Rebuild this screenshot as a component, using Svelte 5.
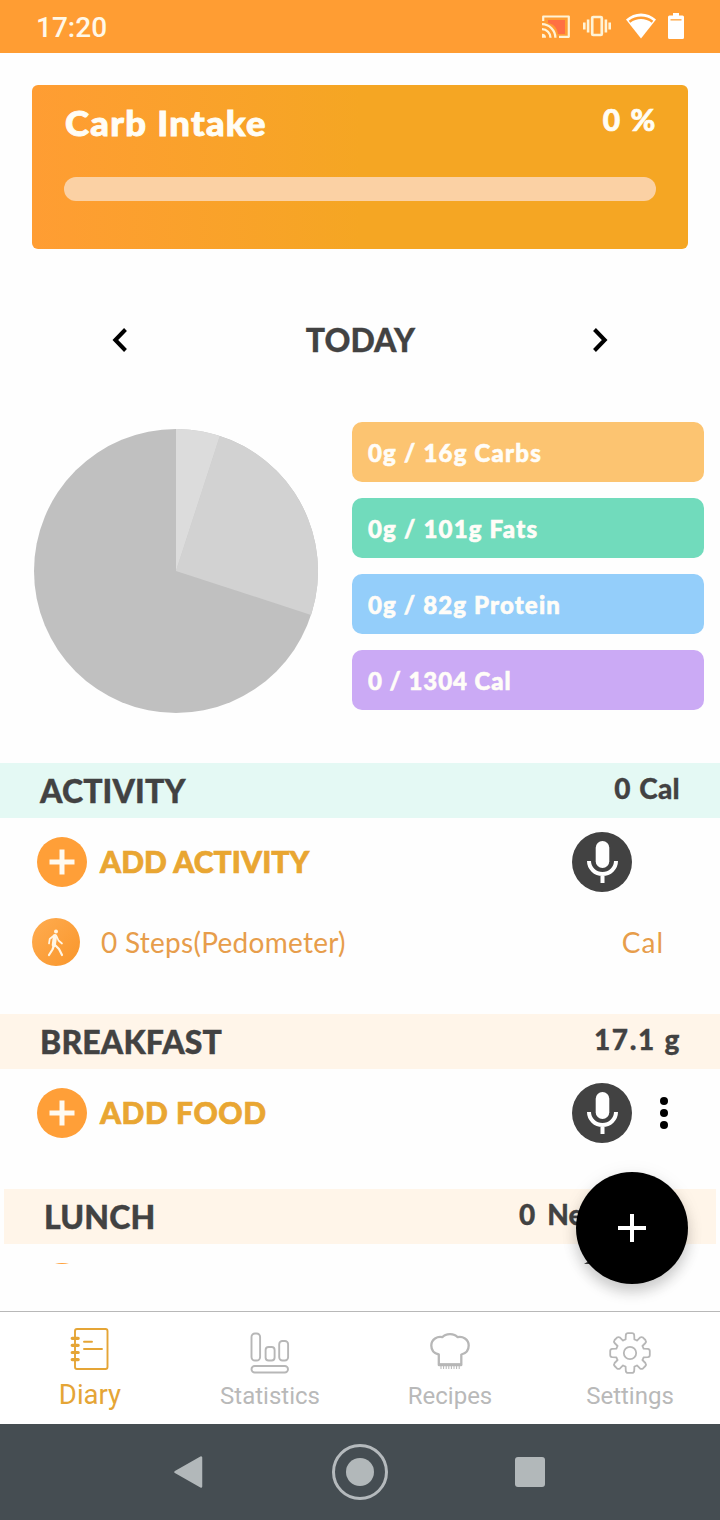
<script>
  const macros = [
    { text: '0g / 16g Carbs', color: '#fcc471', spacing: 1.2 },
    { text: '0g / 101g Fats', color: '#71dbbc', spacing: 1.2 },
    { text: '0g / 82g Protein', color: '#94cefa', spacing: 1.15 },
    { text: '0 / 1304 Cal', color: '#cbaaf5', spacing: 0.95 }
  ];
</script>

{#snippet plus()}
  <span class="plus">
    <svg width="50" height="50" viewBox="0 0 50 50"><path d="M25 12.5v25M12.5 25h25" stroke="#fffaf0" stroke-width="5" /></svg>
  </span>
{/snippet}

{#snippet mic()}
  <svg class="mic" width="60" height="60" viewBox="0 0 60 60">
    <circle cx="30" cy="30" r="30" fill="#424242" />
    <rect x="23.7" y="9" width="13.6" height="27" rx="6.8" fill="#fff" />
    <path d="M17 29a13.5 13 0 0 0 27 0M30.5 42v9" fill="none" stroke="#fff" stroke-width="4" />
  </svg>
{/snippet}

<div class="phone">
  <header class="status">
    <span class="clock">17:20</span>
    <svg class="cast" width="28" height="24" viewBox="0 0 28 24">
      <path d="M6 5h17v14h-7C15 12 11 9 6 8z" fill="#ff7043" />
      <path d="M1.2 6V1.5h25.6v20.3H17" fill="none" stroke="#fff3d6" stroke-width="2.2" stroke-linejoin="round" />
      <path d="M0 9.2a13.6 13.6 0 0 1 13.4 13.6M0 14.2a8.6 8.6 0 0 1 8.5 8.6" fill="none" stroke="#fff3d6" stroke-width="2.3" />
      <path d="M0 18.8a4 4 0 0 1 4 4H0z" fill="#fff3d6" />
    </svg>
    <svg class="vibe" width="28" height="22" viewBox="0 0 28 22">
      <rect x="9.2" y="2" width="9.6" height="18" rx="1" fill="none" stroke="#fff3d6" stroke-width="2.7" />
      <path d="M1.3 7.5v7M5.1 4.5v13M26.700 7.500v7M22.900 4.500v13" stroke="#fff3d6" stroke-width="2.600" />
    </svg>
    <svg class="wifi" width="30" height="26" viewBox="0 0 30 26">
      <path d="M0 6.600C8.500-1.700 21.500-1.700 30 6.600L15 25.500z" fill="#fff" />
      <path d="M3.500 8.700C10.500 3.500 19.500 3.500 26.500 8.700" fill="none" stroke="#ff9d33" stroke-width="2.600" />
    </svg>
    <svg class="battery" width="16" height="26" viewBox="0 0 16 26">
      <path d="M5 0h6v2.500h3.500q1.500 0 1.500 1.500v20.500q0 1.500-1.500 1.500h-13Q0 26 0 24.500V4q0-1.500 1.500-1.500H5z" fill="#fff" />
      <path d="M2.500 6.800h11" stroke="#ffb45f" stroke-width="1.600" />
    </svg>
  </header>

  <main>
    <section class="intake">
      <div class="intake-top">
        <h1>Carb Intake</h1>
        <strong>0 %</strong>
      </div>
      <div class="track"></div>
    </section>

    <nav class="day">
      <svg width="16" height="26" viewBox="0 0 16 26"><path d="M13.500 2.500L3.300 13l10.200 10.500" fill="none" stroke="#000" stroke-width="4" /></svg>
      <span>TODAY</span>
      <svg width="16" height="26" viewBox="0 0 16 26"><path d="M2.500 2.500L12.700 13 2.500 23.500" fill="none" stroke="#000" stroke-width="4" /></svg>
    </nav>

    <section class="overview">
      <svg width="284" height="284" viewBox="-142 -142 284 284">
        <circle r="142" fill="#c0c0c0" />
        <path d="M0 0L43.880-135.050A142 142 0 0 1 135.050 43.880z" fill="#d2d2d2" />
        <path d="M0 0V-142A142 142 0 0 1 43.880-135.050z" fill="#dcdcdc" />
      </svg>
      <div class="macros">
        {#each macros as m}
          <div class="macro" style="background:{m.color};letter-spacing:{m.spacing}px">{m.text}</div>
        {/each}
      </div>
    </section>

    <section class="meal activity">
      <div class="head mint"><h2>ACTIVITY</h2><b class="burned">0 Cal</b></div>
      <div class="add">{@render plus()}<span class="label">ADD ACTIVITY</span>{@render mic()}</div>
      <div class="steps">
        <span class="walk">
          <svg width="48" height="48" viewBox="0 0 48 48" fill="none" stroke="#fff6e6" stroke-linecap="round" stroke-linejoin="round">
            <circle cx="24" cy="13.500" r="2" fill="#fff6e6" stroke="none" />
            <path d="M23 18l-1.200 9" stroke-width="4.200" />
            <path d="M22 17.500l-4.300 3.500-.7 4.500M24.500 18l2 4.500 3.500 3" stroke-width="1.700" />
            <path d="M21.800 28l-1.300 3.500-3.500 5.500M23 27l4 4 3 6" stroke-width="2.200" />
          </svg>
        </span>
        <span>0 Steps(Pedometer)</span>
        <span class="cal">Cal</span>
      </div>
    </section>

    <section class="meal breakfast">
      <div class="head"><h2>BREAKFAST</h2><b class="carbs">17.1 g</b></div>
      <div class="add">
        {@render plus()}<span class="label food">ADD FOOD</span>{@render mic()}
        <svg class="dots" width="8" height="32" viewBox="0 0 8 32"><circle cx="4" cy="4" r="4" /><circle cx="4" cy="16" r="4" /><circle cx="4" cy="28" r="4" /></svg>
      </div>
    </section>

    <section class="meal lunch">
      <div class="head"><h2>LUNCH</h2><b class="net">0&nbsp; Net</b></div>
      <div class="add">{@render plus()}{@render mic()}</div>
    </section>
  </main>

  <footer class="tabs">
    <div class="tab on">
      <svg width="40" height="44" viewBox="0 0 40 44" fill="none" stroke="#e5a536">
        <rect x="5" y="2" width="32.500" height="40" rx="2" stroke-width="1.900" />
        <path d="M14 14.800h8M14 22h18" stroke-width="1.900" stroke-linecap="round" />
        <path d="M2.200 11.300h6M2.200 18.300h6M2.200 25.500h6M2.200 32.600h6" stroke-width="3.200" stroke-linecap="round" />
      </svg>
      <span>Diary</span>
    </div>
    <div class="tab">
      <svg width="40" height="44" viewBox="0 0 40 44" fill="none" stroke="#b7b7b7" stroke-width="1.900">
        <rect x="1.500" y="3.500" width="8.600" height="27" rx="3.500" />
        <rect x="15.600" y="17" width="9" height="13.500" rx="3" />
        <rect x="29.200" y="11" width="8.900" height="19.500" rx="3.200" />
        <rect x="1.500" y="36" width="36.500" height="6.500" rx="3.250" />
      </svg>
      <span>Statistics</span>
    </div>
    <div class="tab">
      <svg width="40" height="44" viewBox="0 0 40 44" fill="none" stroke="#b7b7b7">
        <path d="M8.800 35V24.500C4 23.500 1.300 20 1.300 15.500C1.300 9 7.500 6 12.500 7.200C15.500 3 24.500 3 27.500 7.200C32.500 6 38.700 9 38.700 15.500C38.700 20 36 23.500 31.300 24.500V35z" stroke-width="2.300" stroke-linejoin="round" />
        <path d="M8.500 34.500h23" stroke-width="2.700" />
        <path d="M10.500 37.500h19.500" stroke-width="3" stroke-dasharray="1 1.600" />
      </svg>
      <span>Recipes</span>
    </div>
    <div class="tab">
      <svg class="gear" width="44" height="44" viewBox="-22 -22 44 44" fill="none" stroke="#b7b7b7" stroke-width="1.800" stroke-linejoin="round">
        <circle r="6.200" />
        <path d="M-4.200-17.800Q-4-19.800-2-19.800H2Q4-19.800 4.200-17.800L4.400-13.600Q6.200-13 7-12.400L10-15.400Q11.500-16.500 13-15.400L15.400-13Q16.500-11.500 15.400-10L12.400-7Q13-6.200 13.600-4.400L17.800-4.200Q19.800-4 19.800-2V2Q19.800 4 17.800 4.200L13.600 4.400Q13 6.200 12.400 7L15.400 10Q16.500 11.500 15.400 13L13 15.400Q11.500 16.500 10 15.400L7 12.400Q6.200 13 4.400 13.600L4.200 17.800Q4 19.800 2 19.800H-2Q-4 19.800-4.200 17.800L-4.400 13.600Q-6.200 13-7 12.400L-10 15.400Q-11.500 16.500-13 15.400L-15.400 13Q-16.500 11.500-15.400 10L-12.400 7Q-13 6.200-13.600 4.400L-17.800 4.200Q-19.800 4-19.800 2V-2Q-19.800-4-17.800-4.200L-13.600-4.400Q-13-6.200-12.400-7L-15.400-10Q-16.500-11.500-15.400-13L-13-15.400Q-11.500-16.500-10-15.400L-7-12.400Q-6.200-13-4.400-13.600z" />
      </svg>
      <span>Settings</span>
    </div>
  </footer>

  <div class="system">
    <svg width="30" height="34" viewBox="0 0 30 34"><path d="M2.500 17L28 2.500v29z" fill="#b2b8ba" stroke="#b2b8ba" stroke-width="2.500" stroke-linejoin="round" /></svg>
    <svg width="56" height="56" viewBox="0 0 56 56"><circle cx="28" cy="28" r="26.500" fill="none" stroke="#b5babd" stroke-width="3" /><circle cx="28" cy="28" r="14" fill="#b2b8ba" /></svg>
    <span class="square"></span>
  </div>

  <button class="fab" aria-label="Add">
    <svg width="28" height="28" viewBox="0 0 28 28"><path d="M14 0v28M0 14h28" stroke="#fff" stroke-width="4" /></svg>
  </button>
</div>

<style>
  :global(body) { margin: 0; background: #fefefe; }
  .phone { position: relative; width: 720px; height: 1520px; display: flex; flex-direction: column; overflow: hidden; background: #fefefe; color: #424242; font-family: Lato, sans-serif; }
  .phone * { box-sizing: border-box; }
  svg { display: block; flex: none; }
  span, b, strong, h1, h2 { white-space: nowrap; }
  .status { height: 53px; flex: none; display: flex; align-items: center; padding: 0 36px 1px; background: #ff9d33; }
  .clock { flex: 1; font: 500 28px Roboto, sans-serif; color: #fff8e8; padding-top: 3px; }
  .cast { margin-top: 1px; }
  .vibe { margin-left: 13px; }
  .wifi { margin-left: 15px; }
  .battery { margin-left: 12px; }
  main { height: 1211px; flex: none; overflow: hidden; display: flex; flex-direction: column; }
  main > * { flex: none; }
  .intake { height: 164px; margin: 32px 32px 0; padding: 0 32px; border-radius: 6px; background: linear-gradient(90deg, #ff9d33 0%, #f5a623 50%, #f5a623 100%); }
  .intake-top { height: 92px; display: flex; justify-content: space-between; color: #fffdf5; }
  h1 { margin: 0; padding: 17px 0 0 1px; font-size: 34px; line-height: 42px; font-weight: 900; letter-spacing: 1.2px; transform: scaleX(1.07); transform-origin: left; -webkit-text-stroke: 0.9px; }
  strong { padding-top: 14px; font-size: 30px; line-height: 40px; font-weight: 900; word-spacing: 2px; letter-spacing: 0.6px; -webkit-text-stroke: 0.7px; }
  .track { height: 24px; border-radius: 12px; background: #fbd1a4; }
  .day { height: 60px; margin-top: 61px; padding: 0 112px; display: flex; align-items: center; justify-content: space-between; font-size: 32px; font-weight: 900; -webkit-text-stroke: 0.3px; }
  .day span { padding: 0 0 1px 1px; }
  .overview { display: flex; align-items: center; justify-content: space-between; height: 288px; margin: 52px 16px 53px 34px; }
  .overview > svg { margin-top: 10px; }
  .macros { width: 352px; display: flex; flex-direction: column; gap: 16px; }
  .macro { height: 60px; border-radius: 10px; padding: 0 16px; line-height: 61px; color: #fffdf8; font-size: 24px; font-weight: 900; white-space: nowrap; -webkit-text-stroke: 0.6px; }
  .activity { height: 251px; }
  .breakfast { height: 175px; }
  .lunch { margin: 0 4px; }
  .head { height: 55px; display: flex; justify-content: space-between; padding: 0 40px; background: #fff5e9; }
  .mint { background: #e4f9f4; }
  h2 { margin: 0; font-size: 32px; line-height: 56px; font-weight: 900; letter-spacing: 0.15px; -webkit-text-stroke: 0.4px; }
  b { font-size: 28px; line-height: 51px; font-weight: 900; -webkit-text-stroke: 0.3px; }
  .burned { letter-spacing: 0.3px; word-spacing: 1.5px; }
  .carbs { letter-spacing: 1.7px; margin-right: -1px; }
  .net { width: 157px; word-spacing: -1px; letter-spacing: 0.2px; }
  .add { height: 88px; display: flex; align-items: center; padding: 0 88px 0 37px; font-size: 30px; font-weight: 900; color: #e9a632; }
  .label { padding-bottom: 2px; letter-spacing: 0.1px; -webkit-text-stroke: 0.7px; }
  .food { letter-spacing: 0.55px; }
  .plus { width: 50px; height: 50px; border-radius: 50%; background: #ff9f38; margin-right: 13px; flex: none; }
  .mic { margin-left: auto; }
  .breakfast .add { padding-right: 52px; }
  .dots { margin-left: 28px; }
  .lunch .add { padding: 0 84px 0 33px; }
  .steps { height: 48px; margin-top: 12px; padding: 0 56px 0 32px; display: flex; align-items: center; font-size: 28px; letter-spacing: 0.27px; color: #e79d4b; }
  .walk { width: 48px; height: 48px; border-radius: 50%; background: linear-gradient(135deg, #ffac50, #f9962b); margin-right: 21px; }
  .cal { margin-left: auto; letter-spacing: 1px; }
  .tabs { height: 113px; margin-top: 47px; flex: none; border-top: 1px solid #b8b8b8; display: grid; grid-template-columns: repeat(4, 1fr); background: #fff; }
  .tab { display: flex; flex-direction: column; align-items: center; padding-top: 18px; font: 24px/30px Roboto, sans-serif; color: #b9b9b9; }
  .tab span { margin-top: 7px; }
  .gear { margin: 1px 1px -1px 0; }
  .on { padding-top: 15px; font-size: 27.5px; color: #e5a536; }
  .on span { margin-top: 9px; }
  .system { height: 96px; flex: none; background: #454d52; display: flex; align-items: center; padding-left: 173px; }
  .system svg:nth-child(2) { margin-left: 129px; }
  .square { width: 30px; height: 30px; border-radius: 3px; background: #b2b8ba; margin-left: 127px; }
  .fab { position: absolute; left: 576px; top: 1172px; width: 112px; height: 112px; border: 0; border-radius: 50%; background: #000; display: flex; align-items: center; justify-content: center; padding: 0; box-shadow: 0 8px 14px rgba(0, 0, 0, 0.18), 0 2px 20px rgba(0, 0, 0, 0.06); }
</style>
